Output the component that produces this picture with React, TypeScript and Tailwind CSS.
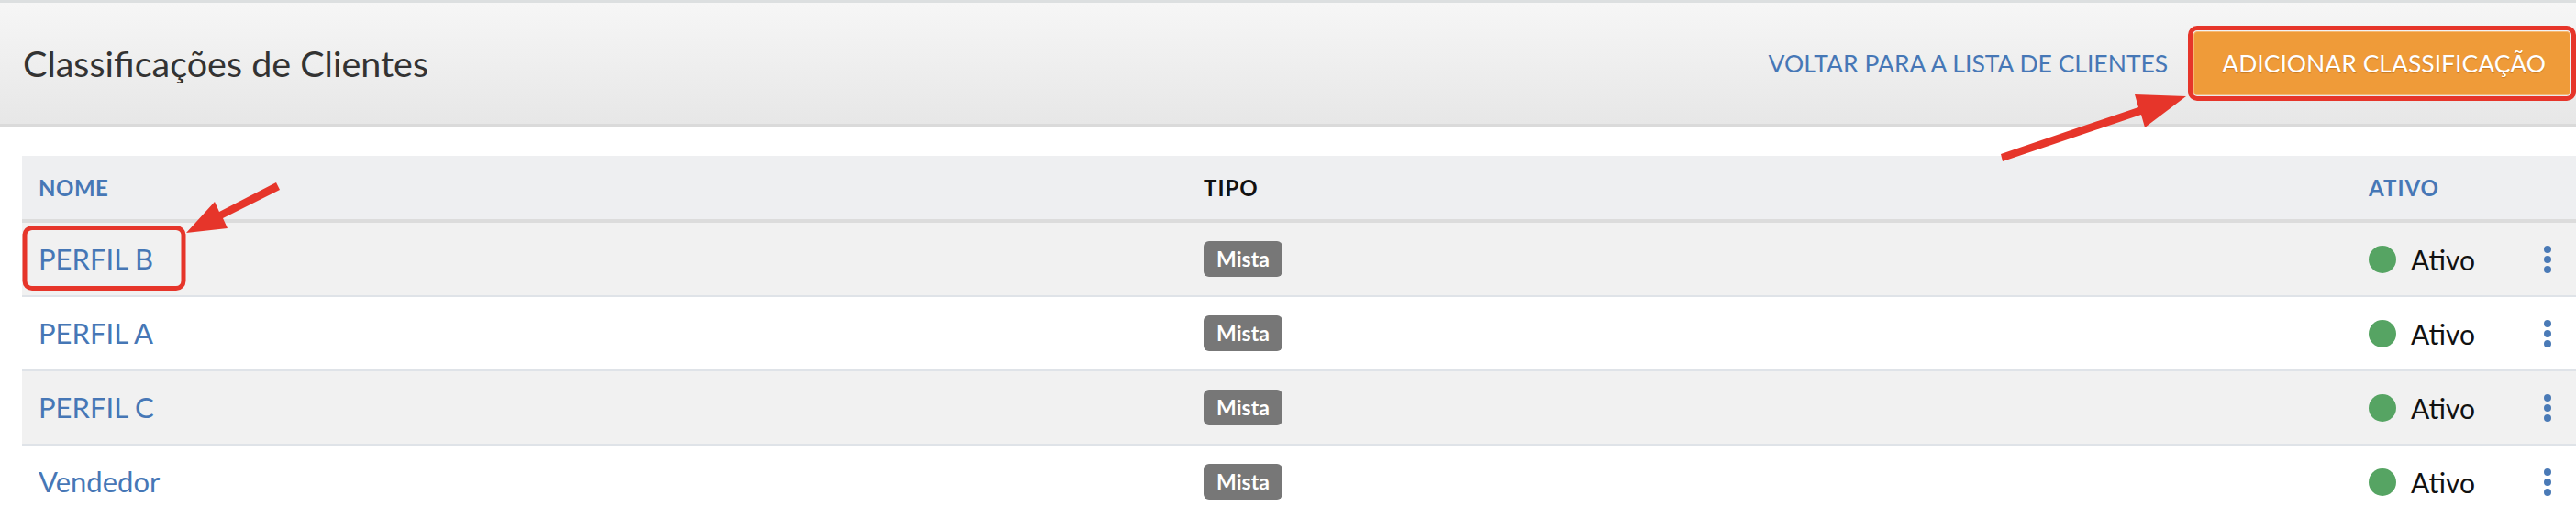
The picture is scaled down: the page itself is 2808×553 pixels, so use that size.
import React from "react";

const rows = [
  { name: "PERFIL B", odd: true },
  { name: "PERFIL A", odd: false },
  { name: "PERFIL C", odd: true },
  { name: "Vendedor", odd: false },
];

function Kebab() {
  return (
    <div className="flex flex-col gap-[3px]">
      <span className="block w-[8px] h-[8px] rounded-full bg-[#4a7ab6]" />
      <span className="block w-[8px] h-[8px] rounded-full bg-[#4a7ab6]" />
      <span className="block w-[8px] h-[8px] rounded-full bg-[#4a7ab6]" />
    </div>
  );
}

export default function App() {
  return (
    <div className="relative w-[2808px] h-[553px] overflow-hidden bg-white font-['Lato',sans-serif]">
      <header className="h-[138px] border-t-[3px] border-b-[3px] border-t-[#dcdfe0] border-b-[#dadada] bg-gradient-to-b from-[#f6f6f6] to-[#e7e7e7] flex items-center justify-between pl-[25px]">
        <h1 className="text-[39.5px] leading-none text-[#333333]">Classificações de Clientes</h1>
        <div className="flex items-center">
          <a className="text-[26.5px] leading-none text-[#4677b6] mr-[22px]">VOLTAR PARA A LISTA DE CLIENTES</a>
          <div className="border-[5px] border-[#e6352a] rounded-[10px] p-[1px]">
            <button className="h-[70px] pl-[30px] pr-[26px] rounded-[4px] bg-[#ef9b39] border border-[#f5b874] text-white text-[26.5px] leading-none [text-shadow:0_1px_1px_rgba(120,60,0,0.35)]">
              ADICIONAR CLASSIFICAÇÃO
            </button>
          </div>
        </div>
      </header>

      <div className="ml-[24px] mt-[32px]">
        <div className="flex items-center h-[73px] bg-[#eeeff1] border-b-[4px] border-[#dcdcdc] text-[24px] font-bold leading-none">
          <div className="w-[1288px] pl-[18px] text-[#4677b6] tracking-[0.5px]">NOME</div>
          <div className="w-[1270px] text-[#111] tracking-[1px]">TIPO</div>
          <div className="flex-1 text-[#4677b6] tracking-[1px]">ATIVO</div>
        </div>
        {rows.map((r) => (
          <div
            key={r.name}
            className={`flex items-center h-[81px] border-b-[2px] border-[#dfe3e8] ${r.odd ? "bg-[#f1f1f1]" : "bg-white"}`}
          >
            <div className="w-[1288px] pl-[18px] text-[31px] leading-none text-[#4677b6]">{r.name}</div>
            <div className="w-[1270px]">
              <span className="inline-flex items-center justify-center w-[86px] h-[39px] rounded-[6px] bg-[#777777] text-white text-[23px] font-bold leading-none">
                Mista
              </span>
            </div>
            <div className="flex-1 flex items-center justify-between pr-[27px]">
              <div className="flex items-center gap-[16px]">
                <span className="block w-[30px] h-[30px] rounded-full bg-[#56a463]" />
                <span className="text-[30px] leading-none text-[#111]">Ativo</span>
              </div>
              <Kebab />
            </div>
          </div>
        ))}
      </div>

      <svg className="absolute inset-0 pointer-events-none" width="2808" height="553" viewBox="0 0 2808 553">
        <polygon
          points="2181,168 2331,117 2327,103 2383,105 2338,139 2334,125 2183,176"
          fill="#e6352a"
        />
        <polygon points="301,199 239,231 234,220 203,254 248,249 243,238 305,207" fill="#e6352a" />
        <rect x="27" y="248.5" width="173" height="66" rx="8" fill="none" stroke="#e6352a" strokeWidth="5" />
      </svg>
    </div>
  );
}
